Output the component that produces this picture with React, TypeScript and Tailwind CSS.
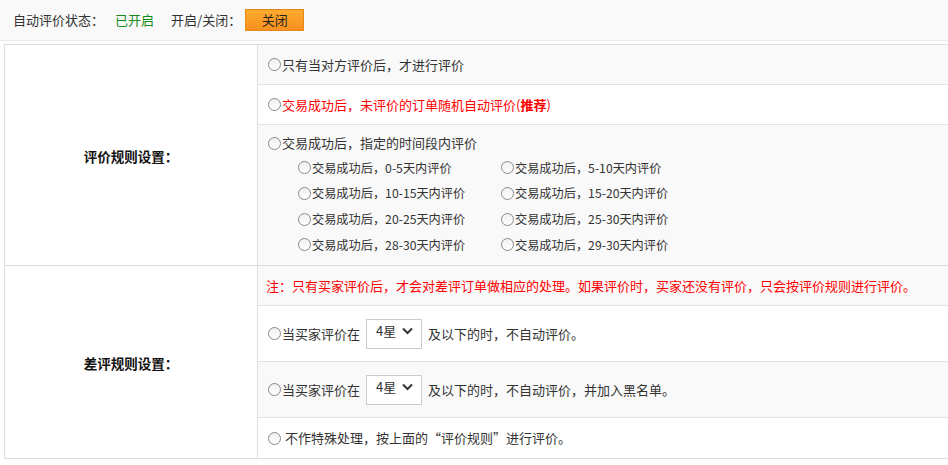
import React from "react";

const Radio = () => (
  <span className="inline-block w-[13px] h-[13px] rounded-full border border-[#8a8a8a] bg-gradient-to-b from-[#f0f0f0] to-white shrink-0 mr-[1px]" />
);

const Select = () => (
  <span className="inline-flex items-center justify-between w-[56px] h-[30px] border border-[#cccccc] bg-white mx-[6px] pl-[9px] pr-[8px] text-[13px] text-[#333]">
    <span className="-mt-[5px]">4星</span>
    <svg width="11" height="8" viewBox="0 0 11 8" className="-mt-[5px]">
      <path d="M1 1.5 L5.5 6 L10 1.5" fill="none" stroke="#333" strokeWidth="2" />
    </svg>
  </span>
);

const periods = [
  "交易成功后，0-5天内评价",
  "交易成功后，5-10天内评价",
  "交易成功后，10-15天内评价",
  "交易成功后，15-20天内评价",
  "交易成功后，20-25天内评价",
  "交易成功后，25-30天内评价",
  "交易成功后，28-30天内评价",
  "交易成功后，29-30天内评价",
];

export default function App() {
  return (
    <div
      className="w-[948px] h-[465px] bg-white overflow-hidden text-[13px] text-[#333]"
      style={{ fontFamily: '"Microsoft YaHei", "Noto Sans CJK SC", sans-serif' }}
    >
      <div className="h-[42px] bg-[#f9f9f9] border-b border-[#ececec] flex items-center pl-[13px] -mt-[1px]">
        <span>自动评价状态：</span>
        <span className="ml-[11px] text-[#138c1c]">已开启</span>
        <span className="ml-[17px]">开启/关闭：</span>
        <span className="ml-[4px] w-[59px] h-[22px] flex items-center justify-center bg-gradient-to-b from-[#ffab2e] to-[#f7901e] border border-[#e5891a] text-[#222]">
          关闭
        </span>
      </div>
      <div className="mt-[3px] ml-[4px] border-t border-l border-[#dddddd] w-[960px]">
        <div className="flex border-b border-[#dddddd]">
          <div className="w-[253px] shrink-0 border-r border-[#dddddd] flex items-center justify-center font-bold text-[#111] pt-[2px] text-[13.5px]">
            评价规则设置：
          </div>
          <div className="flex-1 flex flex-col">
            <div className="h-[40px] flex items-center pl-[10px] bg-[#f9f9f9] border-b border-[#e3e3e3]">
              <Radio />
              <span>只有当对方评价后，才进行评价</span>
            </div>
            <div className="h-[40px] flex items-center pl-[10px] bg-white border-b border-[#e3e3e3] text-[#ff0000]">
              <Radio />
              <span>
                交易成功后，未评价的订单随机自动评价(<b>推荐</b>)
              </span>
            </div>
            <div className="h-[140px] bg-[#f9f9f9] pl-[10px] pt-[9px]">
              <div className="flex items-center h-[18px]">
                <Radio />
                <span>交易成功后，指定的时间段内评价</span>
              </div>
              <div className="grid grid-cols-[203px_203px] pl-[30px] mt-[3px]">
                {periods.map((p) => (
                  <div key={p} className="flex items-center h-[25.7px]">
                    <Radio />
                    <span className="text-[12.2px]">{p}</span>
                  </div>
                ))}
              </div>
            </div>
          </div>
        </div>
        <div className="flex border-b border-[#dddddd]">
          <div className="w-[253px] shrink-0 border-r border-[#dddddd] flex items-center justify-center font-bold text-[#111] pt-[2px] text-[13.5px]">
            差评规则设置：
          </div>
          <div className="flex-1 flex flex-col">
            <div className="h-[40px] flex items-center pl-[8px] bg-[#f9f9f9] border-b border-[#e3e3e3] text-[#ff0000]">
              注：只有买家评价后，才会对差评订单做相应的处理。如果评价时，买家还没有评价，只会按评价规则进行评价。
            </div>
            <div className="h-[56px] flex items-center pl-[10px] bg-white border-b border-[#e3e3e3]">
              <Radio />
              <span>当买家评价在</span>
              <Select />
              <span>及以下的时，不自动评价。</span>
            </div>
            <div className="h-[56px] flex items-center pl-[10px] bg-[#f9f9f9] border-b border-[#e3e3e3]">
              <Radio />
              <span>当买家评价在</span>
              <Select />
              <span>及以下的时，不自动评价，并加入黑名单。</span>
            </div>
            <div className="h-[40px] flex items-center pl-[10px] bg-white">
              <Radio />
              <span className="ml-[3px]">不作特殊处理，按上面的“评价规则”进行评价。</span>
            </div>
          </div>
        </div>
      </div>
    </div>
  );
}
